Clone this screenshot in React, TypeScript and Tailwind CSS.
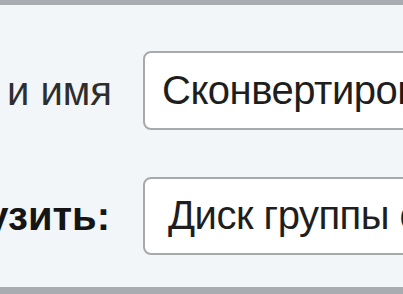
import React from "react";

export default function App() {
  return (
    <div
      className="flex h-[294px] w-[403px] flex-col overflow-hidden bg-[#f3f6f8]"
      style={{ fontFamily: '"Liberation Sans", Arial, sans-serif' }}
    >
      <div className="h-[5px] w-full shrink-0 bg-[#a9acb1]" />
      <div className="flex flex-1 flex-col gap-[47px] pt-[46px]">
        <div className="flex items-center gap-[31px]">
          <div className="flex w-[112px] shrink-0 justify-end">
            <span className="whitespace-nowrap text-[40px] font-normal leading-none text-[#2e2e2e]">
              Путь и имя
            </span>
          </div>
          <div className="flex h-[79px] w-[320px] shrink-0 items-center rounded-[8px] border-2 border-[#a7a9ab] bg-white pl-[17px] pb-[2px]">
            <span className="whitespace-nowrap text-[40px] tracking-[-0.5px] leading-none text-[#1e1e1e]">
              Сконвертированный
            </span>
          </div>
        </div>
        <div className="flex items-center gap-[31px]">
          <div className="flex w-[110px] shrink-0 justify-end">
            <span className="whitespace-nowrap text-[40px] font-bold leading-none text-[#151515]">
              Загрузить:
            </span>
          </div>
          <div className="ml-[2px] flex h-[78px] w-[320px] shrink-0 items-center rounded-[8px] border-2 border-[#a7a9ab] bg-white pl-[23px] pb-[2px]">
            <span className="whitespace-nowrap text-[40px] tracking-[-0.5px] leading-none text-[#1e1e1e]">
              Диск группы сотрудников
            </span>
          </div>
        </div>
      </div>
      <div className="h-[7px] w-full shrink-0 bg-[#a9acb1]" />
    </div>
  );
}
